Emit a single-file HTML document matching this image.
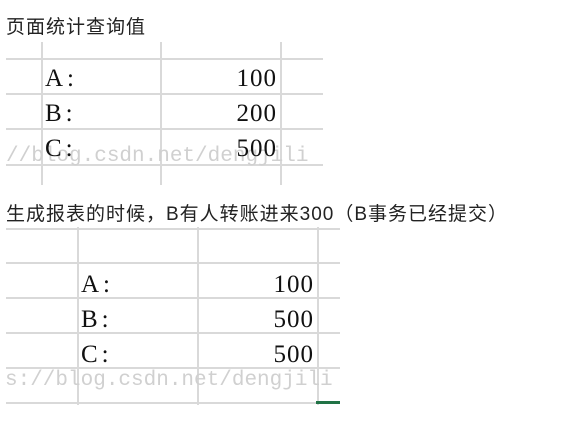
<!DOCTYPE html><html><head><meta charset="utf-8"><style>
body{margin:0;width:583px;height:432px;background:#fff;position:relative;overflow:hidden;font-family:"Liberation Sans","Noto Sans CJK SC",sans-serif}
.t{position:absolute;left:6px;font-size:19px;letter-spacing:1px;color:#222;white-space:nowrap}
.h,.v{position:absolute;background:#d9d9d9}
.h{height:2px}.v{width:2px}
.c{position:absolute;font-family:"Liberation Serif","Noto Serif CJK SC",serif;font-size:25px;letter-spacing:1px;color:#111;line-height:1}
.l{letter-spacing:4px}
.r{text-align:right;width:100px}
.w{position:absolute;font-family:"Liberation Mono",monospace;font-size:21px;color:#d0d0d0;line-height:1;white-space:nowrap}
</style></head><body>
<div class="t" style="top:12px">页面统计查询值</div>
<div class="v" style="left:41px;top:42px;height:143px"></div>
<div class="v" style="left:160px;top:42px;height:143px"></div>
<div class="v" style="left:280px;top:42px;height:143px"></div>
<div class="h" style="left:6px;top:58px;width:317px"></div>
<div class="h" style="left:6px;top:93px;width:317px"></div>
<div class="h" style="left:6px;top:128px;width:317px"></div>
<div class="h" style="left:6px;top:164px;width:317px"></div>
<div class="w" style="left:6px;top:146px">//blog.csdn.net/dengjili</div>
<div class="c l" style="left:45px;top:66px">A:</div><div class="c r" style="left:177px;top:66px">100</div>
<div class="c l" style="left:45px;top:101px">B:</div><div class="c r" style="left:177px;top:101px">200</div>
<div class="c l" style="left:45px;top:136px">C:</div><div class="c r" style="left:177px;top:136px">500</div>
<div class="t" style="top:199px">生成报表的时候，B有人转账进来300（B事务已经提交）</div>
<div class="v" style="left:77px;top:227px;height:178px"></div>
<div class="v" style="left:197px;top:227px;height:178px"></div>
<div class="v" style="left:317px;top:227px;height:178px"></div>
<div class="h" style="left:6px;top:228px;width:334px"></div>
<div class="h" style="left:6px;top:262px;width:334px"></div>
<div class="h" style="left:6px;top:297px;width:334px"></div>
<div class="h" style="left:6px;top:332px;width:334px"></div>
<div class="h" style="left:6px;top:367px;width:334px"></div>
<div class="h" style="left:6px;top:402px;width:334px"></div>
<div class="w" style="left:5px;top:370px">s://blog.csdn.net/dengjili</div>
<div class="c l" style="left:81px;top:272px">A:</div><div class="c r" style="left:214px;top:272px">100</div>
<div class="c l" style="left:81px;top:307px">B:</div><div class="c r" style="left:214px;top:307px">500</div>
<div class="c l" style="left:81px;top:342px">C:</div><div class="c r" style="left:214px;top:342px">500</div>
<div style="position:absolute;left:316px;top:401px;width:24px;height:3px;background:#217346"></div>
</body></html>
